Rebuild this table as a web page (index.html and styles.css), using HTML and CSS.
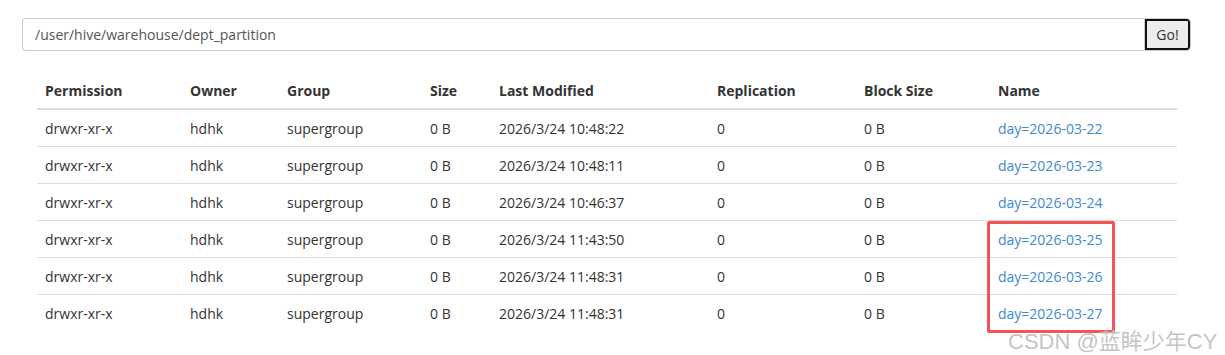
FILE: index.html
```html
<!DOCTYPE html>
<html>
<head>
<meta charset="utf-8">
<link rel="stylesheet" href="styles.css">
</head>
<body>
<div class="page">
  <div class="search">
    <input class="path" type="text" value="/user/hive/warehouse/dept_partition">
    <button class="go">Go!</button>
  </div>
  <div class="table-wrap">
    <table class="files">
      <thead>
        <tr>
          <th class="c-perm">Permission</th>
          <th class="c-owner">Owner</th>
          <th class="c-group">Group</th>
          <th class="c-size">Size</th>
          <th class="c-mod">Last Modified</th>
          <th class="c-rep">Replication</th>
          <th class="c-block">Block Size</th>
          <th class="c-name">Name</th>
        </tr>
      </thead>
      <tbody>
        <tr><td>drwxr-xr-x</td><td>hdhk</td><td>supergroup</td><td>0 B</td><td>2026/3/24 10:48:22</td><td>0</td><td>0 B</td><td><a href="#">day=2026-03-22</a></td></tr>
        <tr><td>drwxr-xr-x</td><td>hdhk</td><td>supergroup</td><td>0 B</td><td>2026/3/24 10:48:11</td><td>0</td><td>0 B</td><td><a href="#">day=2026-03-23</a></td></tr>
        <tr><td>drwxr-xr-x</td><td>hdhk</td><td>supergroup</td><td>0 B</td><td>2026/3/24 10:46:37</td><td>0</td><td>0 B</td><td><a href="#">day=2026-03-24</a></td></tr>
        <tr><td>drwxr-xr-x</td><td>hdhk</td><td>supergroup</td><td>0 B</td><td>2026/3/24 11:43:50</td><td>0</td><td>0 B</td><td><a href="#">day=2026-03-25</a></td></tr>
        <tr><td>drwxr-xr-x</td><td>hdhk</td><td>supergroup</td><td>0 B</td><td>2026/3/24 11:48:31</td><td>0</td><td>0 B</td><td><a href="#">day=2026-03-26</a></td></tr>
        <tr><td>drwxr-xr-x</td><td>hdhk</td><td>supergroup</td><td>0 B</td><td>2026/3/24 11:48:31</td><td>0</td><td>0 B</td><td><a href="#">day=2026-03-27</a></td></tr>
      </tbody>
    </table>
    <div class="highlight"></div>
  </div>
  <div class="watermark">CSDN @蓝眸少年CY</div>
</div>
</body>
</html>
```
FILE: styles.css
```css
html, body {
  margin: 0;
  padding: 0;
  background: #fff;
}
body {
  font-family: "Open Sans", "Liberation Sans", sans-serif;
  font-size: 14px;
  color: #333;
}
.page {
  position: relative;
  width: 1225px;
  height: 355px;
  overflow: hidden;
}
.search {
  display: flex;
  margin: 18px 0 0 22px;
  width: 1169px;
  height: 33px;
}
.path {
  flex: 1;
  box-sizing: border-box;
  height: 33px;
  border: 1px solid #ccc;
  border-right: none;
  border-radius: 4px 0 0 4px;
  padding: 0 12px;
  font-family: inherit;
  font-size: 14px;
  color: #555;
  outline: none;
}
.go {
  box-sizing: border-box;
  width: 47px;
  height: 33px;
  border: 1px solid #ccc;
  border-radius: 0 4px 4px 0;
  background: #ececec;
  box-shadow: inset 0 0 0 2px #111;
  font-family: inherit;
  font-size: 14px;
  color: #333;
  padding: 0;
}
.table-wrap {
  position: relative;
  margin: 20px 0 0 37px;
  width: 1140px;
}
.files {
  width: 1140px;
  border-collapse: collapse;
  table-layout: fixed;
}
.files th {
  text-align: left;
  font-weight: 700;
  height: 36px;
  padding: 1px 8px 0;
  border-bottom: 2px solid #ddd;
  vertical-align: middle;
}
.files td {
  height: 36px;
  padding: 0 8px;
  border-top: 1px solid #ddd;
  vertical-align: middle;
}
.files tbody tr:first-child td {
  border-top: none;
}
.c-perm { width: 129px; }
.c-owner { width: 81px; }
.c-group { width: 127px; }
.c-size { width: 53px; }
.c-mod { width: 202px; }
.c-rep { width: 131px; }
.c-block { width: 118px; }
.files a {
  color: #4189d2;
  text-decoration: none;
}
.highlight {
  position: absolute;
  left: 950px;
  top: 150px;
  width: 122px;
  height: 106px;
  border: 3px solid #f45454;
  border-radius: 2px;
}
.watermark {
  position: absolute;
  left: 1008px;
  top: 323px;
  font-family: "Liberation Sans", "Noto Sans CJK SC", sans-serif;
  font-size: 22px;
  color: rgba(170, 170, 170, 0.7);
  text-shadow: 0 0 1px rgba(255, 255, 255, 0.8);
  white-space: nowrap;
}
```
